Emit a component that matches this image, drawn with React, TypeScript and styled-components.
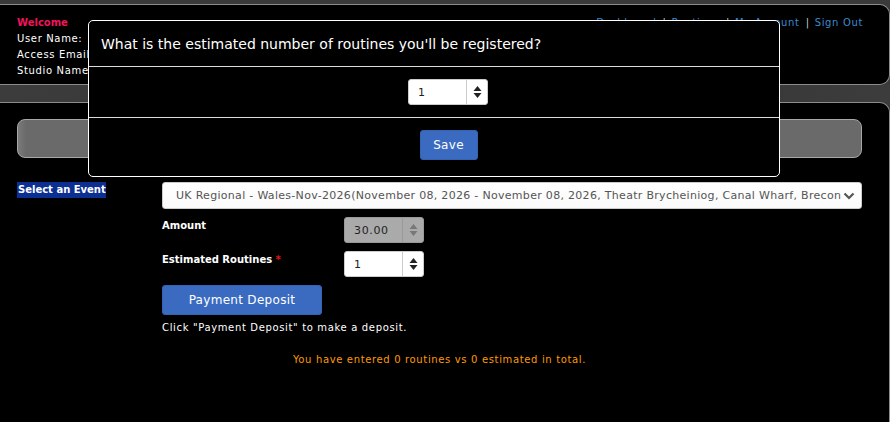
import React from 'react';
import styled, { createGlobalStyle } from 'styled-components';

const GlobalStyle = createGlobalStyle`
  html, body {
    margin: 0;
    padding: 0;
    background: #000;
  }
  body {
    font-family: "DejaVu Sans", Verdana, sans-serif;
    font-size: 10px;
    letter-spacing: 0.65px;
    color: #fff;
  }
  * {
    box-sizing: border-box;
  }
`;

const Frame = styled.div`
  background: #3a3a3a;
  padding-top: 4px;
  min-height: 422px;
  display: flex;
  flex-direction: column;
`;

const HeaderPanel = styled.div`
  background: #000;
  border-top: 1px solid #8c8c8c;
  border-bottom: 1px solid #8c8c8c;
  border-right: 1px solid #8c8c8c;
  border-radius: 0 10px 10px 0;
  height: 81px;
  padding: 10px 26px 0 17px;
  display: flex;
  justify-content: space-between;
`;

const UserInfo = styled.div`
  display: flex;
  flex-direction: column;
  line-height: 16px;
`;

const Welcome = styled.span`
  color: #f0145a;
  font-weight: bold;
  letter-spacing: 0;
`;

const Nav = styled.nav`
  display: flex;
  line-height: 16px;
  color: #3b8ad2;
`;

const NavLink = styled.a`
  color: #3b8ad2;
  text-decoration: none;
`;

const NavSep = styled.span`
  color: #ccc;
  margin: 0 5px 0 6px;
`;

const Band = styled.div`
  height: 17px;
  background: linear-gradient(to right, #3c3c3c, #343434 60%, #3c3c3c);
`;

const ContentPanel = styled.div`
  flex: 1;
  background: #000;
  border-top: 1px solid #8c8c8c;
  border-right: 1px solid #8c8c8c;
  border-radius: 0 10px 0 0;
  padding: 16px 27px 40px 17px;
`;

const TitleBox = styled.div`
  height: 39px;
  background: linear-gradient(to right, #7a7a7a, #6a6a6a 8px, #6a6a6a);
  border: 1px solid #a8a8a8;
  border-radius: 8px;
`;

const EventRow = styled.div`
  display: grid;
  grid-template-columns: 145px 1fr;
  align-items: start;
  margin-top: 24px;
`;

const HighlightLabel = styled.span`
  justify-self: start;
  background: #0b2f92;
  color: #fff;
  font-weight: bold;
  letter-spacing: 0;
  padding: 2px 0 2px 1px;
  line-height: 12px;
`;

const SelectBox = styled.div`
  height: 27px;
  background: linear-gradient(to bottom, #fff, #fafafa);
  border: 1px solid #ccc;
  border-radius: 3px;
  display: flex;
  align-items: center;
  justify-content: space-between;
  padding: 0 6px 0 13px;
  font-size: 11px;
  letter-spacing: 0.3px;
  color: #555;
  white-space: nowrap;
  overflow: hidden;
`;

const Fields = styled.div`
  margin-left: 145px;
  margin-top: 8px;
  display: flex;
  flex-direction: column;
  gap: 8px;
`;

const FieldRow = styled.div`
  display: grid;
  grid-template-columns: 182px 80px;
  align-items: start;
`;

const FieldLabel = styled.label`
  font-weight: bold;
  letter-spacing: 0;
  padding-top: 3px;
`;

const Required = styled.span`
  color: #e11;
`;

const Spinner = styled.div<{ $disabled?: boolean }>`
  width: 80px;
  height: 26px;
  display: flex;
  background: ${(p) => (p.$disabled ? '#aaa' : '#fff')};
  border: 1px solid ${(p) => (p.$disabled ? '#999' : '#ccc')};
  border-radius: 3px;
  font-size: 11px;
  color: #222;
`;

const SpinValue = styled.span`
  flex: 1;
  display: flex;
  align-items: center;
  padding-left: 9px;
`;

const SpinArrows = styled.div<{ $disabled?: boolean }>`
  width: 21px;
  border-left: 1px solid ${(p) => (p.$disabled ? '#999' : '#ccc')};
  display: flex;
  align-items: center;
  justify-content: center;
  color: ${(p) => (p.$disabled ? '#777' : '#222')};
`;

const BlueButton = styled.button<{ $width: number }>`
  width: ${(p) => p.$width}px;
  height: 30px;
  background: #3a6bc0;
  border: 1px solid #3463b3;
  border-radius: 3px;
  color: #fff;
  font-family: "DejaVu Sans", Verdana, sans-serif;
  font-size: 12px;
  letter-spacing: 0.3px;
  padding: 0;
`;

const DepositGroup = styled.div`
  margin-left: 145px;
  margin-top: 8px;
  display: flex;
  flex-direction: column;
  gap: 7px;
`;

const Note = styled.p`
  margin: 0;
  line-height: 12px;
`;

const Summary = styled.p`
  margin: 20px 0 0;
  text-align: center;
  color: #ff9900;
`;

/* dialog */

const Dialog = styled.div`
  position: fixed;
  top: 20px;
  left: 88px;
  width: 692px;
  background: #000;
  border: 1px solid #fff;
  border-radius: 5px;
  display: flex;
  flex-direction: column;
`;

const DialogHeader = styled.div`
  height: 46px;
  padding: 0 12px;
  display: flex;
  align-items: center;
  font-size: 14px;
  letter-spacing: 0;
  border-bottom: 1px solid #ddd;
`;

const DialogBody = styled.div`
  height: 51px;
  padding-left: 28px;
  display: flex;
  justify-content: center;
  align-items: center;
  border-bottom: 1px solid #ddd;
`;

const DialogFooter = styled.div`
  height: 58px;
  padding: 0 0 4px 29px;
  display: flex;
  justify-content: center;
  align-items: center;
`;

const Arrows: React.FC = () => (
  <svg width="9" height="14" viewBox="0 0 9 14">
    <path d="M4.5 1 L8.5 6 L0.5 6 Z" fill="currentColor" />
    <path d="M4.5 13 L8.5 8 L0.5 8 Z" fill="currentColor" />
  </svg>
);

const Chevron: React.FC = () => (
  <svg width="12" height="8" viewBox="0 0 12 8">
    <path d="M1.5 1.5 L6 6 L10.5 1.5" fill="none" stroke="#555" strokeWidth="2.2" />
  </svg>
);

const NumberField: React.FC<{ value: string; disabled?: boolean }> = ({ value, disabled }) => (
  <Spinner $disabled={disabled}>
    <SpinValue>{value}</SpinValue>
    <SpinArrows $disabled={disabled}>
      <Arrows />
    </SpinArrows>
  </Spinner>
);

const navItems = ['Dashboard', 'Routines', 'My Account', 'Sign Out'];

export default function App() {
  return (
    <>
      <GlobalStyle />
      <Frame>
        <HeaderPanel>
          <UserInfo>
            <Welcome>Welcome</Welcome>
            <span>User Name:</span>
            <span>Access Email</span>
            <span>Studio Name</span>
          </UserInfo>
          <Nav>
            {navItems.map((item, i) => (
              <React.Fragment key={item}>
                {i > 0 && <NavSep>|</NavSep>}
                <NavLink href="#">{item}</NavLink>
              </React.Fragment>
            ))}
          </Nav>
        </HeaderPanel>
        <Band />
        <ContentPanel>
          <TitleBox />
          <EventRow>
            <HighlightLabel>Select an Event</HighlightLabel>
            <SelectBox>
              <span>
                UK Regional - Wales-Nov-2026(November 08, 2026 - November 08, 2026, Theatr Brycheiniog, Canal
                Wharf, Brecon
              </span>
              <Chevron />
            </SelectBox>
          </EventRow>
          <Fields>
            <FieldRow>
              <FieldLabel>Amount</FieldLabel>
              <NumberField value="30.00" disabled />
            </FieldRow>
            <FieldRow>
              <FieldLabel>
                Estimated Routines <Required>*</Required>
              </FieldLabel>
              <NumberField value="1" />
            </FieldRow>
          </Fields>
          <DepositGroup>
            <BlueButton $width={160}>Payment Deposit</BlueButton>
            <Note>Click "Payment Deposit" to make a deposit.</Note>
          </DepositGroup>
          <Summary>You have entered 0 routines vs 0 estimated in total.</Summary>
        </ContentPanel>
      </Frame>
      <Dialog>
        <DialogHeader>What is the estimated number of routines you'll be registered?</DialogHeader>
        <DialogBody>
          <NumberField value="1" />
        </DialogBody>
        <DialogFooter>
          <BlueButton $width={58}>Save</BlueButton>
        </DialogFooter>
      </Dialog>
    </>
  );
}
